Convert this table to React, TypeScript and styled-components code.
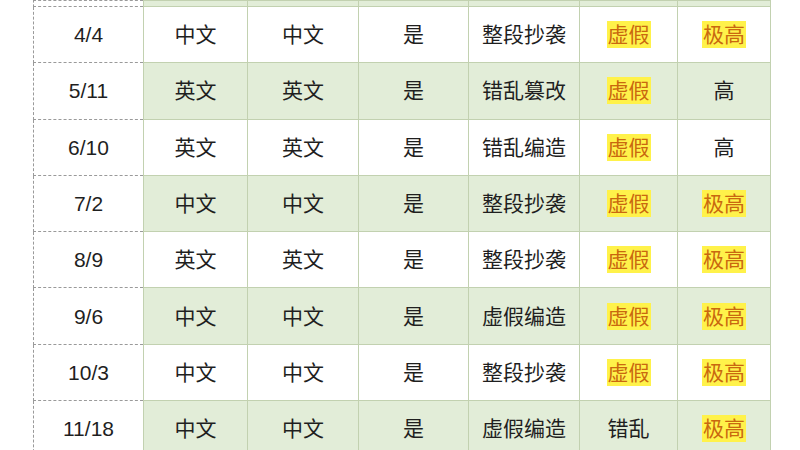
import React from 'react'
import styled, { createGlobalStyle } from 'styled-components'

const GlobalStyle = createGlobalStyle`
  html, body {
    margin: 0;
    padding: 0;
    background: #ffffff;
    overflow: hidden;
  }
`

const Page = styled.div`
  width: 800px;
  height: 450px;
  padding-left: 33px;
  box-sizing: border-box;
  overflow: hidden;
  font-family: 'Liberation Sans', 'Noto Sans CJK SC', sans-serif;
`

const Table = styled.table`
  border-collapse: collapse;
  table-layout: fixed;
  width: 737px;
  color: #1f1f1f;
  font-size: 21px;
`

const Row = styled.tr<{ $shaded: boolean; $clipped?: boolean }>`
  height: ${({ $clipped }) => ($clipped ? '6px' : '56.3px')};
  background: ${({ $shaded }) => ($shaded ? '#e2edd8' : '#ffffff')};
`

const Cell = styled.td`
  border: 1.5px solid #c2d1b0;
  text-align: center;
  vertical-align: middle;
  padding: 0;
  line-height: 1.2;
`

const IndexCell = styled(Cell)`
  background: #ffffff;
  border-left: 1.5px dashed #9a9a9a;
  border-bottom: 1.5px dashed #9a9a9a;
  border-top: 1.5px dashed #9a9a9a;
`

const Mark = styled.span`
  background: #fff24a;
  color: #c9680f;
  padding: 2px 1px;
`

const widths = [110, 104, 111, 110, 111, 98, 93]

type Item = [string, string, string, string, string, string, string]

const rows: Item[] = [
  ['4/4', '中文', '中文', '是', '整段抄袭', '虚假', '极高'],
  ['5/11', '英文', '英文', '是', '错乱篡改', '虚假', '高'],
  ['6/10', '英文', '英文', '是', '错乱编造', '虚假', '高'],
  ['7/2', '中文', '中文', '是', '整段抄袭', '虚假', '极高'],
  ['8/9', '英文', '英文', '是', '整段抄袭', '虚假', '极高'],
  ['9/6', '中文', '中文', '是', '虚假编造', '虚假', '极高'],
  ['10/3', '中文', '中文', '是', '整段抄袭', '虚假', '极高'],
  ['11/18', '中文', '中文', '是', '虚假编造', '错乱', '极高'],
]

const marked = new Set(['虚假', '极高'])

const show = (text: string) => (marked.has(text) ? <Mark>{text}</Mark> : text)

export default function App() {
  return (
    <Page>
      <GlobalStyle />
      <Table>
        <colgroup>
          {widths.map((w, i) => (
            <col key={i} style={{ width: w }} />
          ))}
        </colgroup>
        <tbody>
          <Row $shaded $clipped>
            <IndexCell />
            {widths.slice(1).map((_, i) => (
              <Cell key={i} />
            ))}
          </Row>
          {rows.map((r, i) => (
            <Row key={r[0]} $shaded={i % 2 === 1}>
              <IndexCell>{r[0]}</IndexCell>
              {r.slice(1).map((t, j) => (
                <Cell key={j}>{show(t)}</Cell>
              ))}
            </Row>
          ))}
        </tbody>
      </Table>
    </Page>
  )
}
